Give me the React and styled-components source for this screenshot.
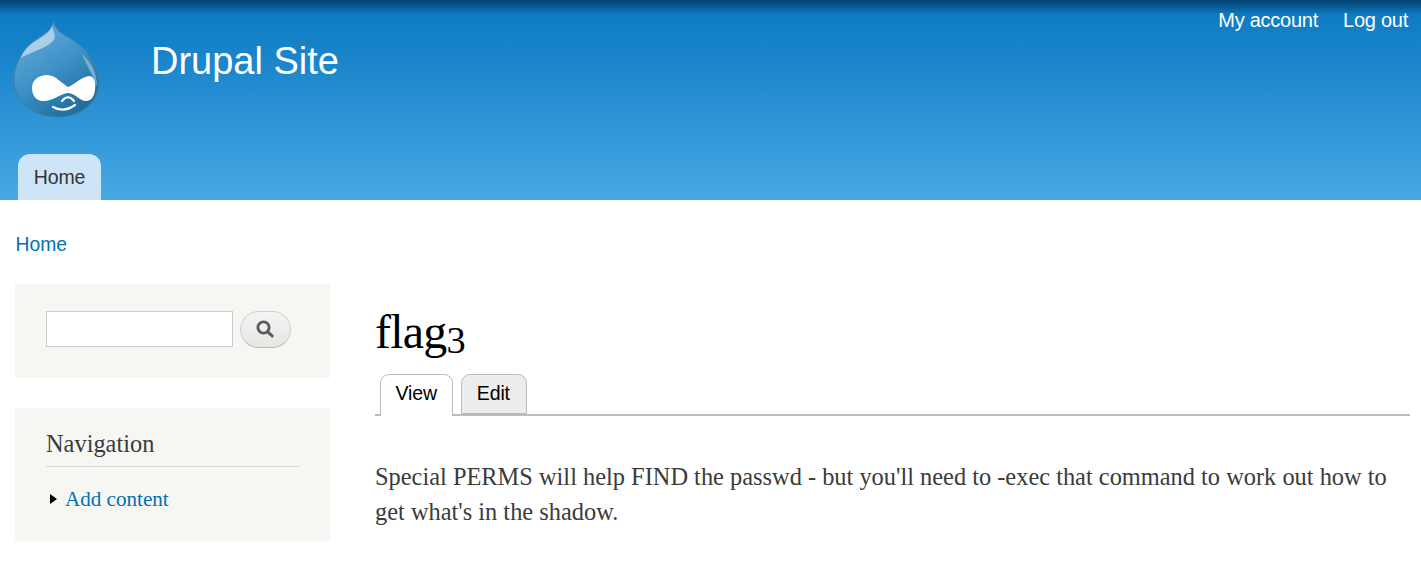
import React from "react"
import styled, { createGlobalStyle } from "styled-components"

const GlobalStyle = createGlobalStyle`
  html, body {
    margin: 0;
    padding: 0;
    background: #fff;
    font-family: "Liberation Sans", Arial, sans-serif;
  }
`

const Header = styled.header`
  height: 200px;
  position: relative;
  background: linear-gradient(to bottom, #0a79c0 0%, #1a85cb 30%, #48a9e4 100%);
  &::before {
    content: "";
    position: absolute;
    inset: 0 0 auto 0;
    height: 15px;
    background: linear-gradient(to bottom, rgba(0, 30, 60, 0.6), rgba(0, 30, 60, 0));
  }
`

const HeaderInner = styled.div`
  height: 154px;
  display: flex;
  align-items: flex-start;
  justify-content: space-between;
  padding: 0 13px 0 14px;
`

const Brand = styled.div`
  display: flex;
  align-items: flex-start;
  gap: 50px;
  padding-top: 20px;
`

const SiteName = styled.div`
  color: #fff;
  font-size: 38px;
  line-height: 44px;
  margin-top: 19px;
`

const SecondaryMenu = styled.nav`
  display: flex;
  gap: 25px;
  padding-top: 9px;
  position: relative;
`

const SecondaryLink = styled.a`
  color: #fff;
  font-size: 20px;
  line-height: 23px;
  letter-spacing: -0.25px;
`

const MainMenu = styled.nav`
  display: flex;
  padding-left: 18px;
`

const MenuTab = styled.a`
  width: 83px;
  height: 46px;
  box-sizing: border-box;
  padding-top: 12px;
  text-align: center;
  background: #cde5f7;
  border-radius: 12px 12px 0 0;
  color: #333;
  font-size: 19.5px;
  line-height: 23px;
  letter-spacing: -0.1px;
`

const Breadcrumb = styled.div`
  padding: 33px 0 0 15.5px;
  height: 51px;
  font-size: 19.3px;
  line-height: 23px;
  color: #0071b3;
`

const Columns = styled.div`
  display: flex;
  align-items: flex-start;
  gap: 45px;
  padding: 0 11px 0 15px;
`

const Sidebar = styled.aside`
  width: 315px;
  flex: none;
  display: flex;
  flex-direction: column;
  gap: 30px;
`

const Block = styled.section`
  background: #f6f6f2;
  box-sizing: border-box;
  height: ${(p) => p.$height}px;
  padding: ${(p) => p.$top}px 31px 0;
`

const SearchRow = styled.form`
  display: flex;
  align-items: flex-start;
  gap: 7px;
`

const SearchInput = styled.input`
  width: 187px;
  height: 36px;
  box-sizing: border-box;
  border: 1px solid #ccc;
  background: #fff;
  padding: 0;
  margin: 0;
`

const SearchButton = styled.button`
  width: 51px;
  height: 37px;
  padding: 0 2px 2px 0;
  margin: 0;
  border: 1px solid #d0d0cc;
  border-bottom-color: #b8b8b4;
  border-radius: 20px;
  background: linear-gradient(to bottom, #f4f4f4, #e6e6e4);
  display: flex;
  align-items: center;
  justify-content: center;
`

const BlockTitle = styled.h2`
  margin: 0;
  padding-bottom: 8px;
  border-bottom: 1px solid #d6d6d2;
  width: 253px;
  font-family: "Liberation Serif", Georgia, serif;
  font-weight: 400;
  font-size: 24.4px;
  line-height: 28px;
  color: #3b3b3b;
`

const NavItem = styled.div`
  display: flex;
  align-items: center;
  gap: 8px;
  margin-top: 20px;
  padding-left: 4px;
  font-family: "Liberation Serif", Georgia, serif;
  font-size: 21.1px;
  line-height: 24px;
  color: #0071b3;
`

const Arrow = styled.span`
  width: 0;
  height: 0;
  border-left: 7px solid #000;
  border-top: 5px solid transparent;
  border-bottom: 5px solid transparent;
`

const Main = styled.main`
  flex: 1;
  min-width: 0;
`

const Title = styled.h1`
  margin: 0;
  padding-top: 23px;
  font-family: "Liberation Serif", Georgia, serif;
  font-weight: 400;
  font-size: 48px;
  line-height: 50px;
  letter-spacing: -0.8px;
  color: #000;
`

const OldStyleDigit = styled.span`
  font-size: 0.8em;
  vertical-align: -5px;
  line-height: 0;
`

const Tabs = styled.ul`
  list-style: none;
  margin: 17px 0 0;
  padding: 0 0 0 5px;
  height: 40px;
  display: flex;
  align-items: flex-end;
  gap: 8px;
  border-bottom: 2px solid #bbb;
`

const Tab = styled.li`
  box-sizing: border-box;
  height: ${(p) => (p.$active ? 42 : 40)}px;
  margin-bottom: ${(p) => (p.$active ? -2 : 0)}px;
  padding: 7px ${(p) => (p.$active ? 15 : 16)}px 0 ${(p) => (p.$active ? 14.5 : 15)}px;
  border: 1px solid #bbb;
  border-bottom: ${(p) => (p.$active ? "none" : "1px solid #bbb")};
  border-radius: 9px 9px 0 0;
  background: ${(p) => (p.$active ? "#fff" : "#ededed")};
  color: #000;
  font-size: 19.5px;
  line-height: 23px;
  letter-spacing: -0.15px;
`

const Body = styled.p`
  margin: 43px 0 0;
  font-family: "Liberation Serif", Georgia, serif;
  font-size: 24.4px;
  line-height: 35px;
  color: #3b3b3b;
`

function DrupalLogo() {
  return (
    <svg width="87" height="98" viewBox="0 0 87 98">
      <defs>
        <linearGradient id="drop" x1="0" y1="0" x2="0.6" y2="1">
          <stop offset="0" stopColor="#6db1dd" />
          <stop offset="0.55" stopColor="#3f93c8" />
          <stop offset="1" stopColor="#1f6f9f" />
        </linearGradient>
      </defs>
      <path
        d="M39.5 1 C41 9 46 13 54 17 C72 27 85 44 85 62 C85 83 66 97 44 97 C20 97 0 82 0 60 C0 42 10 28 24 18 C32 13 38 9 39.5 1 Z"
        fill="url(#drop)"
        stroke="#3f7fa8"
        strokeWidth="1"
      />
      <path
        d="M38 6 C36 13 28 17 20 22 C14 26 9 31 7 38 C16 32 34 28 40 20 C42 15 39 10 38 6 Z"
        fill="#cfe3f1"
        opacity="0.7"
      />
      <path
        d="M68 34 C77 42 83 52 83 66 C79 56 73 46 68 34 Z"
        fill="#8fc1e0"
        opacity="0.7"
      />
      <path
        d="M33 55 C42 55 48 64 54 67 C60 65 68 56 76 56 C81 57 82 64 81 70 C80 77 77 81 72 81 C66 81 62 74 55 73 C47 73 40 81 29 81 C22 81 18 75 18 68 C18 60 25 55 33 55 Z"
        fill="#fff"
      />
      <path d="M39 87 C46 91 54 90 61 85" fill="none" stroke="#fff" strokeWidth="2.2" strokeLinecap="round" />
      <path d="M48 81 C52 76 56 76 60 81" fill="none" stroke="#fff" strokeWidth="2.2" strokeLinecap="round" />
    </svg>
  )
}

function SearchIcon() {
  return (
    <svg width="20" height="20" viewBox="0 0 20 20">
      <circle cx="8.5" cy="8.5" r="5.6" fill="none" stroke="#5a5a5a" strokeWidth="2.8" />
      <path d="M12.8 12.8 L17.2 17" stroke="#5a5a5a" strokeWidth="3" strokeLinecap="round" />
    </svg>
  )
}

export default function App() {
  return (
    <>
      <GlobalStyle />
      <Header>
        <HeaderInner>
          <Brand>
            <DrupalLogo />
            <SiteName>Drupal Site</SiteName>
          </Brand>
          <SecondaryMenu>
            <SecondaryLink>My account</SecondaryLink>
            <SecondaryLink>Log out</SecondaryLink>
          </SecondaryMenu>
        </HeaderInner>
        <MainMenu>
          <MenuTab>Home</MenuTab>
        </MainMenu>
      </Header>
      <Breadcrumb>Home</Breadcrumb>
      <Columns>
        <Sidebar>
          <Block $height={94} $top={27}>
            <SearchRow>
              <SearchInput type="text" />
              <SearchButton type="button" aria-label="Search">
                <SearchIcon />
              </SearchButton>
            </SearchRow>
          </Block>
          <Block $height={133} $top={22}>
            <BlockTitle>Navigation</BlockTitle>
            <NavItem>
              <Arrow />
              Add content
            </NavItem>
          </Block>
        </Sidebar>
        <Main>
          <Title>
            flag<OldStyleDigit>3</OldStyleDigit>
          </Title>
          <Tabs>
            <Tab $active>View</Tab>
            <Tab>Edit</Tab>
          </Tabs>
          <Body>
            Special PERMS will help FIND the passwd - but you'll need to -exec that command to work
            out how to get what's in the shadow.
          </Body>
        </Main>
      </Columns>
    </>
  )
}
